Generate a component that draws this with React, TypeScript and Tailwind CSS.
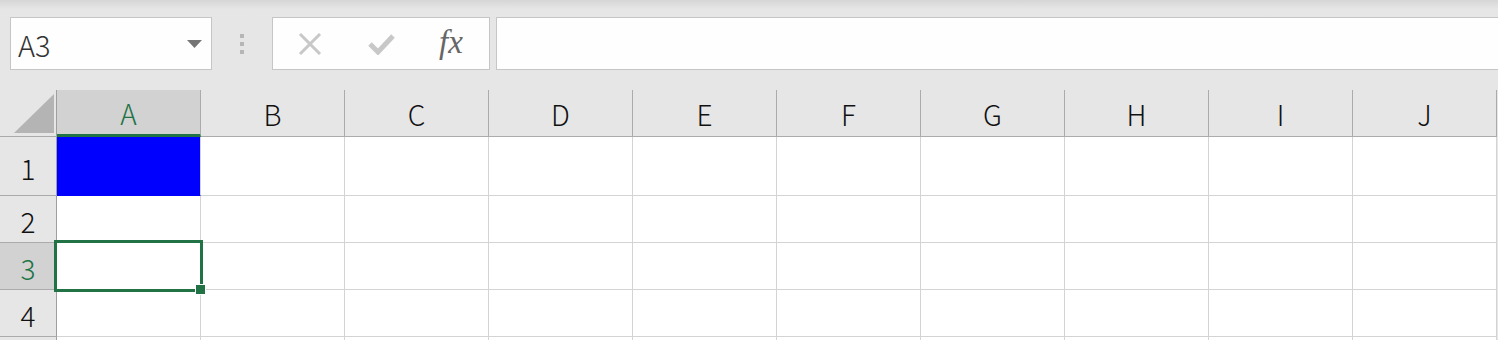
import React from "react";

const COLS = ["A", "B", "C", "D", "E", "F", "G", "H", "I", "J"];
const ROWS = [
  { n: 1, h: "h-[59px]" },
  { n: 2, h: "h-[47px]" },
  { n: 3, h: "h-[47px]" },
  { n: 4, h: "h-[47px]" },
  { n: 5, h: "h-[47px]" },
];

const font = { fontFamily: '"Noto Sans CJK JP", "Noto Sans", sans-serif' };

function Toolbar() {
  return (
    <div className="h-[90px] bg-gradient-to-b from-[#d6d6d6] via-[#e6e6e6] via-[10%] to-[#e6e6e6] flex items-start pt-[17px] pl-[10px]">
      {/* name box */}
      <div className="w-[202px] h-[53px] bg-[#fefefe] border border-[#c6c6c6] flex items-center justify-between pl-[7px] pr-[9px]">
        <span className="text-[29px] leading-none text-[#333] pt-[2px] font-light" style={font}>
          A3
        </span>
        <svg width="15" height="8" viewBox="0 0 15 8">
          <path d="M0 0 H15 L7.5 8 Z" fill="#757575" />
        </svg>
      </div>
      {/* grip dots */}
      <div className="w-[60px] h-[53px] flex flex-col items-center justify-center gap-[4px] pr-[1px]">
        <div className="w-[4px] h-[4px] bg-[#b6b6b6]" />
        <div className="w-[4px] h-[4px] bg-[#b6b6b6]" />
        <div className="w-[4px] h-[4px] bg-[#b6b6b6]" />
      </div>
      {/* cancel / enter / fx */}
      <div className="w-[218px] h-[53px] bg-[#fefefe] border border-[#c6c6c6] flex items-center pl-[25px]">
        <svg width="24" height="22" viewBox="0 0 24 22" className="mt-[1px]">
          <path d="M2 1 L22 21 M22 1 L2 21" stroke="#c8c8c8" strokeWidth="3" />
        </svg>
        <svg width="27" height="22" viewBox="0 0 27 22" className="ml-[46px] mt-[1px]">
          <path d="M2 11 L10 19 L25 3" stroke="#c8c8c8" strokeWidth="5" fill="none" />
        </svg>
        <span
          className="ml-[44px] text-[33px] italic leading-none text-[#666] -mt-[3px]"
          style={{ fontFamily: '"Liberation Serif", "DejaVu Serif", serif' }}
        >
          fx
        </span>
      </div>
      {/* formula input */}
      <div className="flex-1 ml-[6px] h-[53px] bg-[#fefefe] border border-[#c6c6c6] border-r-0" />
    </div>
  );
}

function Sheet() {
  return (
    <div className="grid grid-cols-[57px_repeat(10,144px)] overflow-hidden" style={font}>
      {/* corner */}
      <div className="h-[47px] bg-[#e6e6e6] border-r border-b border-r-[#9f9f9f] border-b-[#ababab] flex items-end justify-end pb-[3px] pr-[2px]">
        <svg width="40" height="39" viewBox="0 0 40 39">
          <path d="M40 0 V39 H0 Z" fill="#b4b4b4" />
        </svg>
      </div>
      {COLS.map((c) =>
        c === "A" ? (
          <div
            key={c}
            className="h-[47px] bg-[#d2d2d2] border-r border-r-[#ababab] border-b-[3px] border-b-[#217346] flex items-center justify-center text-[28px] text-[#217346] font-light"
          >
            <span className="pt-[1px]">{c}</span>
          </div>
        ) : (
          <div
            key={c}
            className="h-[47px] bg-[#e6e6e6] border-r border-b border-r-[#ababab] border-b-[#ababab] flex items-center justify-center text-[28px] text-[#111] font-light"
          >
            <span className="pt-[1px]">{c}</span>
          </div>
        )
      )}
      {ROWS.map((r) => (
        <React.Fragment key={r.n}>
          <div
            className={`${r.h} ${
              r.n === 3 ? "bg-[#d2d2d2] text-[#217346]" : "bg-[#e6e6e6] text-[#111]"
            } border-r border-b border-r-[#9f9f9f] border-b-[#ababab] flex items-center justify-center text-[28px] font-light`}
          >
            {r.n < 5 && <span className="pt-[4px]">{r.n}</span>}
          </div>
          {COLS.map((c) => {
            const blue = r.n === 1 && c === "A";
            const sel = r.n === 3 && c === "A";
            return (
              <div
                key={c}
                className={`${r.h} relative border-r border-b ${
                  blue ? "bg-[#0000ff] border-[#0000ff] border-r-[#d4d4d4]" : "bg-white border-[#d4d4d4]"
                }`}
              >
                {sel && (
                  <div className="absolute left-[-3px] top-[-3px] w-[149px] h-[52px] border-[3px] border-[#217346] z-10">
                    <div className="absolute right-[-5px] bottom-[-5px] w-[9px] h-[9px] bg-[#217346] outline outline-1 outline-white" />
                  </div>
                )}
              </div>
            );
          })}
        </React.Fragment>
      ))}
    </div>
  );
}

export default function App() {
  return (
    <div className="w-[1498px] h-[340px] overflow-hidden bg-[#e6e6e6]">
      <Toolbar />
      <Sheet />
    </div>
  );
}
